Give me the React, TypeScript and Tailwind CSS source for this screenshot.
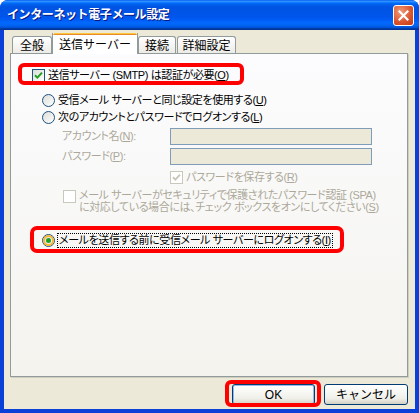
import React from 'react';

const font = "font-['Liberation_Sans','Noto_Sans_CJK_JP',sans-serif]";

function CheckBox({ checked, disabled }: { checked?: boolean; disabled?: boolean }) {
  return (
    <span
      className={`w-[13px] h-[13px] shrink-0 border flex items-center justify-center ${
        disabled ? 'border-[#cac8bb] bg-white' : 'border-[#1c5180] bg-[linear-gradient(135deg,#dcdcd7,#ffffff)]'
      }`}
    >
      {checked && (
        <svg width="9" height="9" viewBox="0 0 9 9">
          <path d="M1 4.2 L3.4 6.6 L8 1.6" stroke={disabled ? '#cac8bb' : '#21a121'} strokeWidth="2" fill="none" />
        </svg>
      )}
    </span>
  );
}

function Radio({ checked }: { checked?: boolean }) {
  return (
    <span className="w-[13px] h-[13px] shrink-0 rounded-full border border-[#1c5180] bg-[linear-gradient(135deg,#dcdcd7,#ffffff)] flex items-center justify-center">
      {checked && (
        <span className="w-[11px] h-[11px] rounded-full border-2 border-[#f8b636] flex items-center justify-center">
          <span className="w-[5px] h-[5px] rounded-full bg-[#21a121]" />
        </span>
      )}
    </span>
  );
}

function Key({ k }: { k: string }) {
  return <span className="underline underline-offset-1">{k}</span>;
}

function Tab({ label, w, active }: { label: string; w: string; active?: boolean }) {
  if (active) {
    return (
      <div className={`${w} h-[21px] -mb-px relative z-10 flex flex-col border-x border-[#919b9c] bg-white`}>
        <div className="h-[3px] bg-[#e68b2c] border-t border-[#ffc83c] rounded-t-[2px]" />
        <div className="flex-1 flex items-center justify-center text-[12px] pt-[1px]">{label}</div>
      </div>
    );
  }
  return (
    <div className={`${w} h-[17px] flex items-center justify-center border border-b-0 border-[#919b9c] rounded-t-[3px] bg-[linear-gradient(#ffffff,#ecebe6)] text-[12px] pt-[2px]`}>
      {label}
    </div>
  );
}

export default function App() {
  return (
    <div className={`w-[419px] h-[413px] flex flex-col bg-[#0a3fd8] rounded-t-[8px] overflow-hidden text-black ${font}`}>
      {/* タイトルバー */}
      <div className="h-[30px] shrink-0 flex items-center pl-[7px] pr-[5px] bg-[linear-gradient(#0058ee_0%,#3593ff_4%,#288eff_6%,#127dff_8%,#036ffc_10%,#0262ee_14%,#0057e5_20%,#0054e3_24%,#0055eb_56%,#005bf5_66%,#026afe_76%,#0062ef_86%,#0052d6_92%,#0040ab_94%,#003092_100%)]">
        <span className="flex-1 text-white font-bold text-[12px] tracking-[-0.4px] [text-shadow:1px_1px_0_#0a1883]">
          インターネット電子メール設定
        </span>
        <div className="w-[21px] h-[21px] rounded-[3px] border border-white bg-[radial-gradient(circle_at_35%_30%,#f09a78,#d9532c_60%,#c23a14)] flex items-center justify-center">
          <svg width="11" height="11" viewBox="0 0 11 11">
            <path d="M1.5 1.5 L9.5 9.5 M9.5 1.5 L1.5 9.5" stroke="white" strokeWidth="2.2" strokeLinecap="square" />
          </svg>
        </div>
      </div>

      {/* 本体 */}
      <div className="flex-1 mx-[4px] mb-[4px] bg-[#ece9d8] flex flex-col">
        {/* タブ */}
        <div className="h-[22px] mt-[1px] pl-[8px] flex items-end">
          <Tab label="全般" w="w-[40px]" />
          <Tab label="送信サーバー" w="w-[86px]" active />
          <Tab label="接続" w="w-[38px]" />
          <div className="w-[1px]" />
          <Tab label="詳細設定" w="w-[59px]" />
        </div>

        {/* パネル */}
        <div className="relative ml-[6px] mr-[7px] h-[324px] border border-[#919b9c] bg-[linear-gradient(#fcfcfe,#f4f3ee)] shadow-[1px_1px_0_#d0cebf] text-[11px] tracking-[-0.4px] leading-none whitespace-nowrap [font-feature-settings:'palt']">
          <div className="flex flex-col pt-[13px]">
            <div className="relative h-[17px] pl-[21px] flex items-center gap-[3px]">
              <CheckBox checked />
              <span>
                送信サーバー (SMTP) は認証が必要(<Key k="O" />)
              </span>
              <div className="absolute left-[7px] top-[-4px] w-[226px] h-[22px] border-[4px] border-[#ff0000] rounded-[6px]" />
            </div>

            <div className="h-[17px] mt-[8px] pl-[31px] flex items-center gap-[3px]">
              <Radio />
              <span>
                受信メール サーバーと同じ設定を使用する(<Key k="U" />)
              </span>
            </div>
            <div className="h-[17px] pl-[31px] flex items-center gap-[3px]">
              <Radio />
              <span>
                次のアカウントとパスワードでログオンする(<Key k="L" />)
              </span>
            </div>

            <div className="h-[17px] mt-[2px] pl-[51px] flex items-center text-[#aca899]">
              <span className="w-[108px]">
                アカウント名(<Key k="N" />):
              </span>
              <div className="w-[202px] h-[17px] border border-[#7f9db9] bg-[#ece9d8]" />
            </div>
            <div className="h-[17px] mt-[3px] pl-[51px] flex items-center text-[#aca899]">
              <span className="w-[108px]">
                パスワード(<Key k="P" />):
              </span>
              <div className="w-[202px] h-[17px] border border-[#7f9db9] bg-[#ece9d8]" />
            </div>

            <div className="h-[17px] mt-[4px] pl-[159px] flex items-center gap-[3px] text-[#aca899]">
              <CheckBox checked disabled />
              <span>
                パスワードを保存する(<Key k="R" />)
              </span>
            </div>

            <div className="mt-[3px] pl-[52px] flex items-start gap-[3px] text-[#aca899]">
              <div className="pt-[1px]">
                <CheckBox disabled />
              </div>
              <div className="leading-[12px]">
                <div>メール サーバーがセキュリティで保護されたパスワード認証 (SPA)</div>
                <div>
                  に対応している場合には、チェック ボックスをオンにしてください(<Key k="S" />)
                </div>
              </div>
            </div>

            <div className="relative h-[17px] mt-[19px] pl-[31px] flex items-center gap-[2px]">
              <Radio checked />
              <span className="border border-dotted border-black px-[1px] py-[1px]">
                メールを送信する前に受信メール サーバーにログオンする(<Key k="I" />)
              </span>
              <div className="absolute left-[19px] top-[-6px] w-[314px] h-[27px] border-[4px] border-[#ff0000] rounded-[7px]" />
            </div>
          </div>
        </div>

        {/* ボタン */}
        <div className="mt-[7px] mr-[7px] flex justify-end gap-[9px]">
          <div className="relative">
            <button className="w-[83px] h-[21px] rounded-[3px] border border-[#003c74] bg-[linear-gradient(#ffffff,#f0f0ea_70%,#d6d0c5)] shadow-[inset_0_0_0_1px_#98b8ea] text-[12px] font-normal flex items-center justify-center">
              OK
            </button>
            <div className="absolute left-[-7px] top-[-4px] w-[96px] h-[27px] border-[4px] border-[#ff0000] rounded-[6px]" />
          </div>
          <button className="w-[84px] h-[21px] rounded-[3px] border border-[#003c74] bg-[linear-gradient(#ffffff,#f0f0ea_70%,#d6d0c5)] text-[12px] font-normal flex items-center justify-center">
            キャンセル
          </button>
        </div>
      </div>
    </div>
  );
}
